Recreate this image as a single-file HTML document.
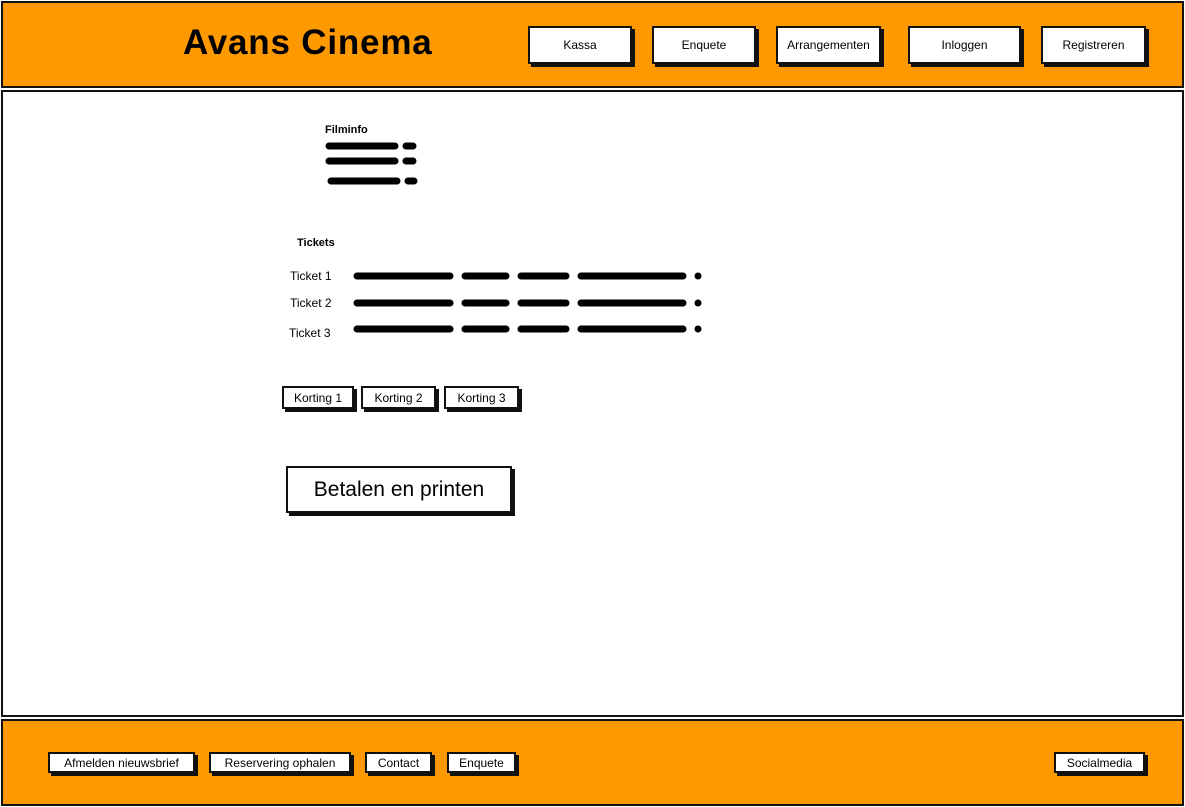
<!DOCTYPE html>
<html><head><meta charset="utf-8"><style>
*{margin:0;padding:0;box-sizing:border-box}
body{width:1185px;height:807px;background:#fff;position:relative;overflow:hidden;font-family:"Liberation Sans",sans-serif;color:#000}
.box{position:absolute;border:2px solid #111}
.or{background:#ff9900}
.btn{position:absolute;background:#fff;border:2px solid #111;box-shadow:3px 3px 0 #111;display:flex;align-items:center;justify-content:center;font-size:12px;white-space:nowrap}
.t{position:absolute;font-size:12px;white-space:nowrap}
</style></head><body>
<div class="box or" style="left:1px;top:1px;width:1183px;height:87px"></div>
<div class="box" style="left:1px;top:90px;width:1183px;height:627px"></div>
<div class="box or" style="left:1px;top:719px;width:1183px;height:87px"></div>
<div class="t" style="left:183px;top:23px;font-size:35px;font-weight:bold;letter-spacing:0.8px">Avans Cinema</div>
<div class="btn" style="left:528px;top:26px;width:104px;height:38px">Kassa</div>
<div class="btn" style="left:652px;top:26px;width:104px;height:38px">Enquete</div>
<div class="btn" style="left:776px;top:26px;width:105px;height:38px">Arrangementen</div>
<div class="btn" style="left:908px;top:26px;width:113px;height:38px">Inloggen</div>
<div class="btn" style="left:1041px;top:26px;width:105px;height:38px">Registreren</div>

<div class="t" style="left:325px;top:124px;font-size:11px;font-weight:bold">Filminfo</div>
<div class="t" style="left:297px;top:237px;font-size:11px;font-weight:bold">Tickets</div>
<div class="t" style="left:290px;top:269px">Ticket 1</div>
<div class="t" style="left:290px;top:296px">Ticket 2</div>
<div class="t" style="left:289px;top:326px">Ticket 3</div>
<svg style="position:absolute;left:0;top:0" width="1185" height="807">
<g stroke="#000" stroke-width="7" stroke-linecap="round" fill="none">
<path d="M329,146 L395,146 M406,146 L413,146 M329,161 L395,161 M406,161 L413,161 M331,181 L397,181 M408,181 L414,181"/>
<path d="M357,276 L450,276 M465,276 L506,276 M521,276 L566,276 M581,276 L683,276 M698,276 L698,276"/>
<path d="M357,303 L450,303 M465,303 L506,303 M521,303 L566,303 M581,303 L683,303 M698,303 L698,303"/>
<path d="M357,329 L450,329 M465,329 L506,329 M521,329 L566,329 M581,329 L683,329 M698,329 L698,329"/>
</g></svg>

<div class="btn" style="left:282px;top:386px;width:72px;height:23px">Korting 1</div>
<div class="btn" style="left:361px;top:386px;width:75px;height:23px">Korting 2</div>
<div class="btn" style="left:444px;top:386px;width:75px;height:23px">Korting 3</div>
<div class="btn" style="left:286px;top:466px;width:226px;height:47px;font-size:21px">Betalen en printen</div>

<div class="btn" style="left:48px;top:752px;width:147px;height:21px">Afmelden nieuwsbrief</div>
<div class="btn" style="left:209px;top:752px;width:142px;height:21px">Reservering ophalen</div>
<div class="btn" style="left:365px;top:752px;width:67px;height:21px">Contact</div>
<div class="btn" style="left:447px;top:752px;width:69px;height:21px">Enquete</div>
<div class="btn" style="left:1054px;top:752px;width:91px;height:21px">Socialmedia</div>
</body></html>
